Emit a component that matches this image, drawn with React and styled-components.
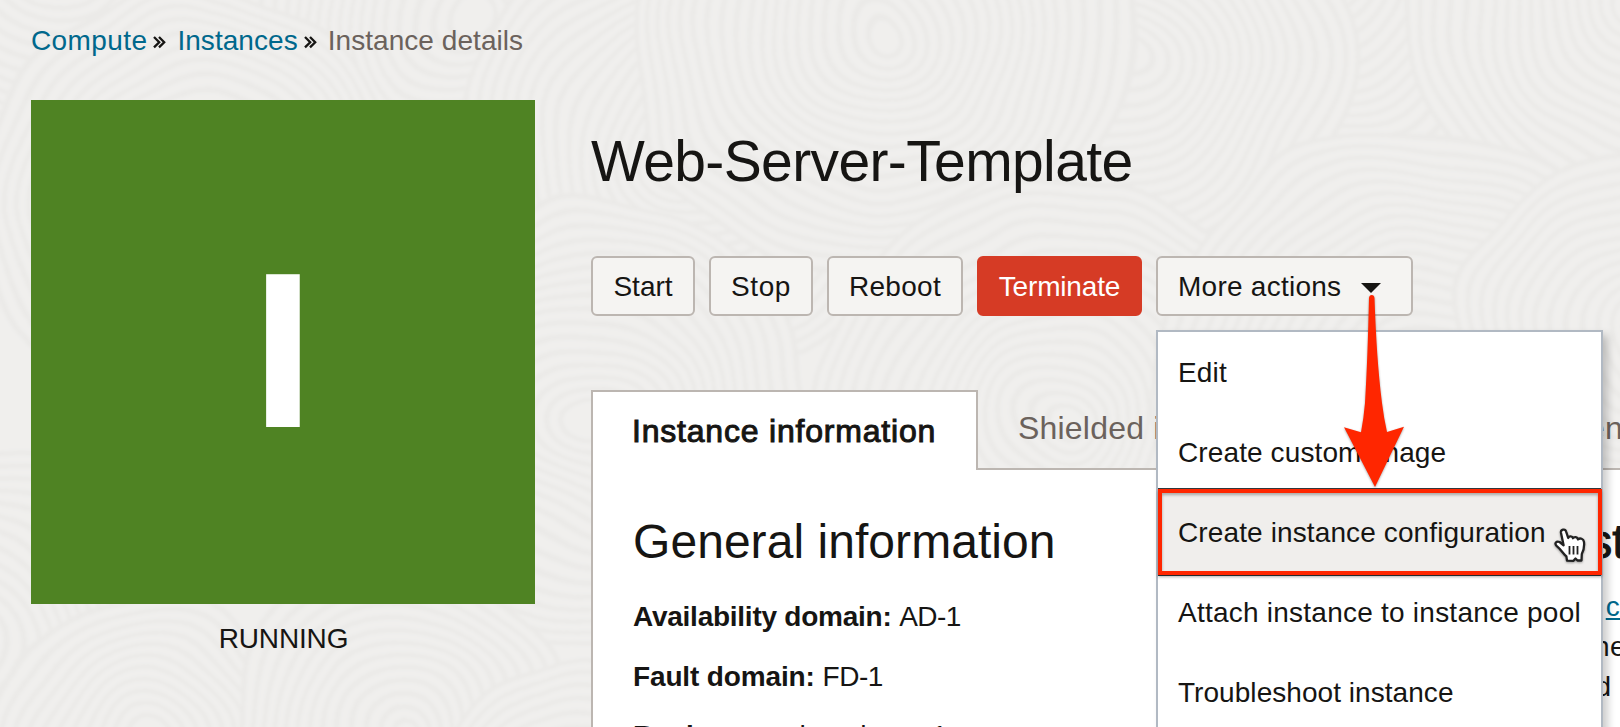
import React from 'react';
import styled, { createGlobalStyle, css } from 'styled-components';

const GlobalStyle = createGlobalStyle`
  * { box-sizing: border-box; }
  body {
    margin: 0;
    overflow: hidden;
    background: #f0efed;
    color: #161513;
    font-family: 'Liberation Sans', Arial, sans-serif;
    font-size: 28px;
  }
`;

const Page = styled.div`
  position: relative;
  isolation: isolate;
  width: 1620px;
  height: 727px;
  overflow: hidden;
  padding: 21px 0 0 31px;
`;

const Texture = styled.svg`
  position: absolute;
  inset: 0;
  z-index: -1;
`;

const Label = styled.span`
  letter-spacing: ${(p) => p.$track || 0}px;
`;

const Breadcrumbs = styled.nav`
  display: flex;
  align-items: center;
  height: 40px;
  line-height: 40px;
  white-space: nowrap;
`;

const Crumb = styled.span`
  color: ${(p) => (p.$current ? '#6b625c' : '#00688c')};
  letter-spacing: ${(p) => p.$track}px;
`;

const Separator = styled.svg`
  flex: none;
  margin: 2px 11px 0 ${(p) => p.$left}px;
`;

const Columns = styled.div`
  display: flex;
  align-items: flex-start;
  gap: 56px;
  margin-top: 39px;
`;

const StatusColumn = styled.aside`
  flex: none;
  width: 504px;
  text-align: center;
`;

const StatusTile = styled.div`
  display: flex;
  align-items: center;
  justify-content: center;
  height: 504px;
  padding-bottom: 4px;
  background: #4f8323;
  color: #fff;
  font-size: 219px;
  font-weight: 700;
  line-height: 1;
  -webkit-text-stroke: 2px #fff;
`;

const StatusText = styled.div`
  margin-top: 15px;
  padding-left: 1px;
  line-height: 40px;
  letter-spacing: -0.15px;
`;

const Main = styled.main`
  flex: none;
  width: 1040px;
`;

const Title = styled.h1`
  margin: 29px 0 0;
  font-size: 57px;
  font-weight: 400;
  line-height: 64px;
  letter-spacing: -0.62px;
`;

const Toolbar = styled.div`
  display: flex;
  gap: 14px;
  margin-top: 63px;
`;

const Button = styled.button`
  display: flex;
  align-items: center;
  justify-content: ${(p) => (p.$menu ? 'flex-start' : 'center')};
  width: ${(p) => p.$width}px;
  height: 60px;
  padding: ${(p) => (p.$menu ? '2px 0 0 20px' : '2px 0 0')};
  border: 2px solid #bcb6b1;
  border-radius: 6px;
  background: #f5f4f2;
  color: inherit;
  font: inherit;
  line-height: 54px;
  white-space: nowrap;
  letter-spacing: ${(p) => p.$track || 0}px;
  ${(p) =>
    p.$danger &&
    css`
      border-color: #d63b25;
      background: #d63b25;
      color: #fff;
    `}
`;

const Caret = styled.svg`
  margin: 2px 0 0 20px;
`;

const MenuAnchor = styled.div`
  position: relative;
`;

const Menu = styled.ul`
  position: absolute;
  top: 74px;
  left: 0;
  z-index: 2;
  width: 447px;
  height: 420px;
  margin: 0;
  padding: 0;
  border: 2px solid #b1b9c3;
  background: #fff;
  box-shadow: 5px 5px 8px rgba(0, 0, 0, 0.2);
  list-style: none;
`;

const MenuItem = styled.li`
  position: relative;
  height: 80px;
  padding-left: ${(p) => p.$inset ?? 20}px;
  line-height: 82px;
  white-space: nowrap;
  letter-spacing: ${(p) => p.$track}px;
  ${(p) =>
    p.$active &&
    css`
      z-index: 0;
      &::before {
        content: '';
        position: absolute;
        inset: -4px 0;
        z-index: -1;
        border: solid #33393d;
        border-width: 1px 0;
        background: #f0eeec;
      }
      &::after {
        content: '';
        position: absolute;
        inset: -3px -1px -3px 0;
        border: 4px solid #ff2600;
        filter: drop-shadow(0 2px 1.5px rgba(0, 0, 0, 0.3));
      }
    `}
`;

const Pointer = styled.svg`
  position: absolute;
  top: 33px;
  left: 395px;
  filter: drop-shadow(0 1px 1px rgba(0, 0, 0, 0.35));
`;

const Arrow = styled.svg`
  position: absolute;
  top: 34px;
  left: 184px;
  z-index: 3;
  filter: drop-shadow(0 1px 1px rgba(0, 0, 0, 0.35));
`;

const Tabs = styled.div`
  display: flex;
  height: 80px;
  margin-top: 74px;
  font-size: 32px;
  white-space: nowrap;
`;

const ActiveTab = styled.div`
  flex: none;
  width: 387px;
  padding: 0 0 0 39px;
  border: 2px solid #bcb6b1;
  border-bottom: 0;
  background: #fff;
  line-height: 78px;
  letter-spacing: 0.8px;
  -webkit-text-stroke: 1px #161513;
`;

const OtherTabs = styled.div`
  display: flex;
  flex: 1;
  gap: 77px;
  padding-left: 40px;
  border-bottom: 2px solid #bcb6b1;
  color: #6b625c;
  line-height: 76px;
  letter-spacing: 0.2px;
`;

const Panel = styled.section`
  display: flex;
  height: 300px;
  padding: 45px 0 0 40px;
  border-left: 2px solid #bcb6b1;
  background: #fff;
`;

const InfoColumn = styled.div`
  flex: none;
  width: ${(p) => p.$width}px;
`;

const Heading = styled.h2`
  margin: 0;
  font-size: 48px;
  font-weight: 400;
  line-height: 54px;
  letter-spacing: 0.05px;
  ${(p) => p.$strong && '-webkit-text-stroke: 1px #161513;'}
`;

const Field = styled.p`
  margin: 0;
  line-height: 60px;
  white-space: nowrap;
  &:last-child {
    margin-top: -1px;
  }
`;

const Fields = styled.div`
  margin-top: 18px;
`;

const AccessNote = styled.p`
  margin: 18px 0 0;
  line-height: 40px;
  white-space: nowrap;
  letter-spacing: 0.3px;
`;

const TextLink = styled.a`
  margin-left: 1.5px;
  color: #00688c;
  text-decoration: underline;
  text-decoration-thickness: 2px;
  text-underline-offset: 2px;
`;

const swirls = [
  [60, -60, 210], [470, 20, 230], [905, -190, 220], [1330, -30, 250], [1640, 10, 230],
  [200, 210, 220], [690, 150, 230], [1120, 60, 230], [880, 30, 250],
  [590, 420, 220], [1060, 420, 240], [1420, 390, 260], [1640, 330, 180],
  [-40, 640, 190], [140, 745, 150], [402, 730, 170], [600, 840, 180],
];

function Backdrop() {
  return (
    <Texture width="1620" height="727" viewBox="0 0 1620 727" aria-hidden="true">
      <filter id="grain" x="0" y="0" width="100%" height="100%">
        <feTurbulence type="fractalNoise" baseFrequency="0.009" numOctaves="1" seed="4" />
        <feDisplacementMap in="SourceGraphic" scale="50" xChannelSelector="R" yChannelSelector="G" />
        <feGaussianBlur stdDeviation="1.8" />
      </filter>
      <rect width="1620" height="727" fill="#f0efed" />
      <g filter="url(#grain)">
        <rect width="1620" height="727" fill="#f0efed" />
        {swirls.map(([cx, cy, radius], i) => (
          <g key={i} fill="none" stroke="#ebeae8" strokeWidth="5">
            <circle cx={cx} cy={cy} r={radius} fill="#f0efed" />
            {Array.from({ length: Math.floor(radius / 13) }, (_, n) => (
              <circle key={n} cx={cx} cy={cy} r={radius - n * 13} />
            ))}
          </g>
        ))}
      </g>
    </Texture>
  );
}

function Chevrons({ left }) {
  return (
    <Separator $left={left} width="13" height="13" viewBox="0 0 13 13" fill="none" stroke="#161513" strokeWidth="2.3">
      <path d="M1 1 L6.2 6.2 L1 11.4 M6 1 L11.2 6.2 L6 11.4" />
    </Separator>
  );
}

export default function App() {
  return (
    <>
      <GlobalStyle />
      <Page>
        <Backdrop />
        <Breadcrumbs>
          <Crumb $track={0.4}>Compute</Crumb>
          <Chevrons left={6} />
          <Crumb $track={0.05}>Instances</Crumb>
          <Chevrons left={6} />
          <Crumb $current $track={0.05}>Instance details</Crumb>
        </Breadcrumbs>
        <Columns>
          <StatusColumn>
            <StatusTile>I</StatusTile>
            <StatusText>RUNNING</StatusText>
          </StatusColumn>
          <Main>
            <Title>Web-Server-Template</Title>
            <Toolbar>
              <Button $width={104}>Start</Button>
              <Button $width={104} $track={0.6}>Stop</Button>
              <Button $width={136} $track={0.3}>Reboot</Button>
              <Button $width={165} $danger $track={-0.17}>Terminate</Button>
              <MenuAnchor>
                <Button $width={257} $menu $track={0.25}>
                  More actions
                  <Caret width="20" height="10" viewBox="0 0 20 10">
                    <path d="M0 0 H20 L10 10 Z" fill="#161513" />
                  </Caret>
                </Button>
                <Menu>
                  <MenuItem $track={0.18}>Edit</MenuItem>
                  <MenuItem $track={0.11}>Create custom image</MenuItem>
                  <MenuItem $active $track={0.12}>
                    Create instance configuration
                    <Pointer width="36" height="40" viewBox="0 0 36 40">
                      <path
                        d="M9.5 15 L8 8 C7.4 4.5 12.2 3.2 13.2 6.8 L15.2 13 C16 10.6 19.3 10.8 20 13.2 C21.3 11.4 24.4 11.8 25 14.4 C27 12.6 30.5 13.6 31 17 C31.5 22 30.8 25.5 28.8 29 L28.5 35.5 L24.5 35.5 L22.5 33.5 L20.5 35.8 L14 35.6 L13.4 31.4 C10 28.5 8.5 25 3.8 21.2 C.8 18.4 3.6 15.6 6.6 17 L10.6 20.3 Z"
                        fill="#fff"
                        stroke="#222"
                        strokeWidth="2.3"
                        strokeLinejoin="round"
                      />
                      <path d="M16.5 21 V29.5 M20.5 21 V29.5 M24.5 21 V29.5" stroke="#222" strokeWidth="1.8" fill="none" />
                    </Pointer>
                  </MenuItem>
                  <MenuItem $track={0.237}>Attach instance to instance pool</MenuItem>
                  <MenuItem $track={0.05}>Troubleshoot instance</MenuItem>
                </Menu>
                <Arrow width="70" height="202" viewBox="1340 290 70 202">
                  <path
                    d="M1369 298 Q1369.3 295 1371.8 295 Q1374.2 295 1374.5 298 C1376 340 1378 370 1382 403 Q1384 419 1387 432 L1404 426.7 L1375 487 L1344 427.3 L1361 432.3 Q1363.6 419 1365 403 C1367 370 1368 340 1369 298 Z"
                    fill="#ff2600"
                  />
                </Arrow>
              </MenuAnchor>
            </Toolbar>
            <Tabs>
              <ActiveTab>Instance information</ActiveTab>
              <OtherTabs>
                <span>Shielded instance</span>
                <span>Oracle Cloud Agent</span>
              </OtherTabs>
            </Tabs>
            <Panel>
              <InfoColumn $width={915}>
                <Heading>General information</Heading>
                <Fields>
                  <Field>
                    <b><Label $track={-0.25}>Availability domain:</Label></b> <Label $track={-0.6}>AD-1</Label>
                  </Field>
                  <Field>
                    <b><Label $track={-0.14}>Fault domain:</Label></b> <Label $track={-0.45}>FD-1</Label>
                  </Field>
                  <Field>
                    <b>Region:</b> <Label>ap-chuncheon-1</Label>
                  </Field>
                </Fields>
              </InfoColumn>
              <InfoColumn $width={400}>
                <Heading $strong>Instance access</Heading>
                <AccessNote>
                  You <TextLink>connect</TextLink> to a running
                  <br />
                  connection. You'll
                  <br />
                  need
                </AccessNote>
              </InfoColumn>
            </Panel>
          </Main>
        </Columns>
      </Page>
    </>
  );
}
